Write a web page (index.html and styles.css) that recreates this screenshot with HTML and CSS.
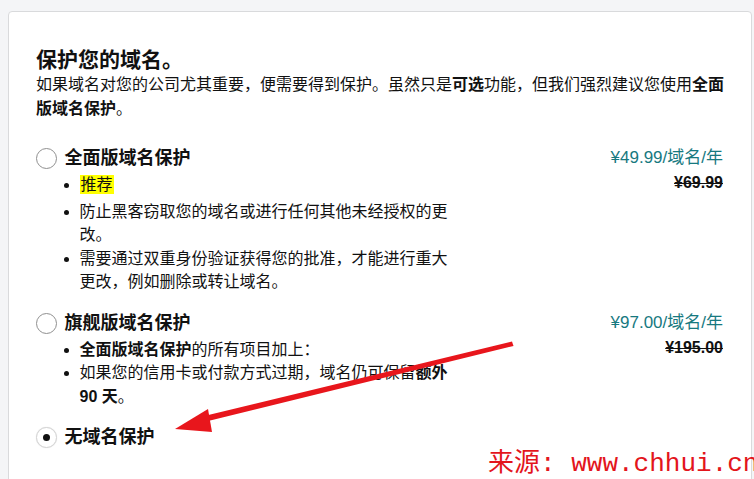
FILE: index.html
```html
<!DOCTYPE html>
<html lang="zh-CN">
<head>
<meta charset="utf-8">
<title>保护您的域名</title>
<link rel="stylesheet" href="styles.css">
</head>
<body>
<div class="card">
  <h2 class="title">保护您的域名。</h2>
  <p class="intro">如果域名对您的公司尤其重要，便需要得到保护。虽然只是<b>可选</b>功能，但我们强烈建议您使用<b>全面版域名保护</b>。</p>

  <div class="option">
    <div class="opt-left">
      <span class="radio"></span>
      <div class="opt-body">
        <div class="opt-title">全面版域名保护</div>
        <ul class="feats">
          <li class="rec"><span class="hl">推荐</span></li>
          <li>防止黑客窃取您的域名或进行任何其他未经授权的更改。</li>
          <li>需要通过双重身份验证获得您的批准，才能进行重大更改，例如删除或转让域名。</li>
        </ul>
      </div>
    </div>
    <div class="price">
      <div class="now">¥49.99/域名/年</div>
      <div class="was">¥69.99</div>
    </div>
  </div>

  <div class="option">
    <div class="opt-left">
      <span class="radio"></span>
      <div class="opt-body">
        <div class="opt-title">旗舰版域名保护</div>
        <ul class="feats">
          <li><b>全面版域名保护</b>的所有项目加上：</li>
          <li>如果您的信用卡或付款方式过期，域名仍可保留<b>额外 90 天</b>。</li>
        </ul>
      </div>
    </div>
    <div class="price">
      <div class="now">¥97.00/域名/年</div>
      <div class="was">¥195.00</div>
    </div>
  </div>

  <div class="option">
    <div class="opt-left">
      <span class="radio checked"></span>
      <div class="opt-body">
        <div class="opt-title">无域名保护</div>
      </div>
    </div>
  </div>
</div>

<svg class="arrow" width="754" height="479" viewBox="0 0 754 479">
  <polygon points="512,341.5 513.5,346 200,423 198,417.5" fill="#e8161c"/>
  <polygon points="175,429 208,409 212,432" fill="#e8161c"/>
</svg>

<div class="watermark">来源: www.chhui.cn</div>
</body>
</html>
```
FILE: styles.css
```css
html, body {
  margin: 0;
  height: 479px;
  overflow: hidden;
}
body {
  background: #f4f5f7;
  padding: 11px 2px 0 8px;
  box-sizing: border-box;
  font-family: "Liberation Sans", "Noto Sans CJK SC", sans-serif;
  color: #111;
  position: relative;
}
.card {
  background: #fff;
  border: 1px solid #d9dadc;
  border-radius: 4px;
  padding: 34px 28px 60px 27px;
  min-height: 500px;
}
.title {
  margin: 0;
  font-size: 21px;
  line-height: 28px;
  font-weight: 700;
}
.intro {
  margin: -1px -6px 0 0;
  font-size: 16px;
  line-height: 23.5px;
}
.intro b { font-weight: 700; }
.option {
  display: flex;
  justify-content: space-between;
  align-items: flex-start;
  margin-top: 16px;
}
.intro + .option { margin-top: 25px; }
.opt-left {
  display: flex;
  align-items: flex-start;
  gap: 8px;
}
.radio {
  width: 19px;
  height: 19px;
  border: 1px solid #8f8f8f;
  border-radius: 50%;
  margin-top: 3px;
  margin-left: -0.5px;
  flex: none;
  display: flex;
  align-items: center;
  justify-content: center;
  background: #fff;
}
.radio.checked {
  border-color: #d4d4d4;
  box-shadow: 0 0 1px rgba(0,0,0,0.15);
}
.radio.checked::after {
  content: "";
  width: 7px;
  height: 7px;
  border-radius: 50%;
  background: #111;
}
.opt-body { width: 390px; }
.opt-title {
  font-size: 18px;
  line-height: 26px;
  font-weight: 700;
}
.feats {
  margin: 2px 0 0;
  padding-left: 15px;
  font-size: 16px;
  line-height: 23.5px;
}
.feats li.rec { margin-bottom: 3px; }
.hl {
  background: #ffff00;
  padding: 1px 1px;
}
.price {
  text-align: right;
}
.now {
  color: #17797f;
  font-size: 17px;
  line-height: 26px;
}
.was {
  font-size: 16px;
  line-height: 24px;
  font-weight: 700;
  text-decoration: line-through;
}
.arrow {
  position: absolute;
  left: 0;
  top: 0;
  pointer-events: none;
}
.watermark {
  position: absolute;
  left: 488px;
  top: 449px;
  font-family: "Liberation Mono", "Noto Sans CJK SC", monospace;
  font-size: 26px;
  line-height: 30px;
  color: #e3151c;
  white-space: nowrap;
}
```
